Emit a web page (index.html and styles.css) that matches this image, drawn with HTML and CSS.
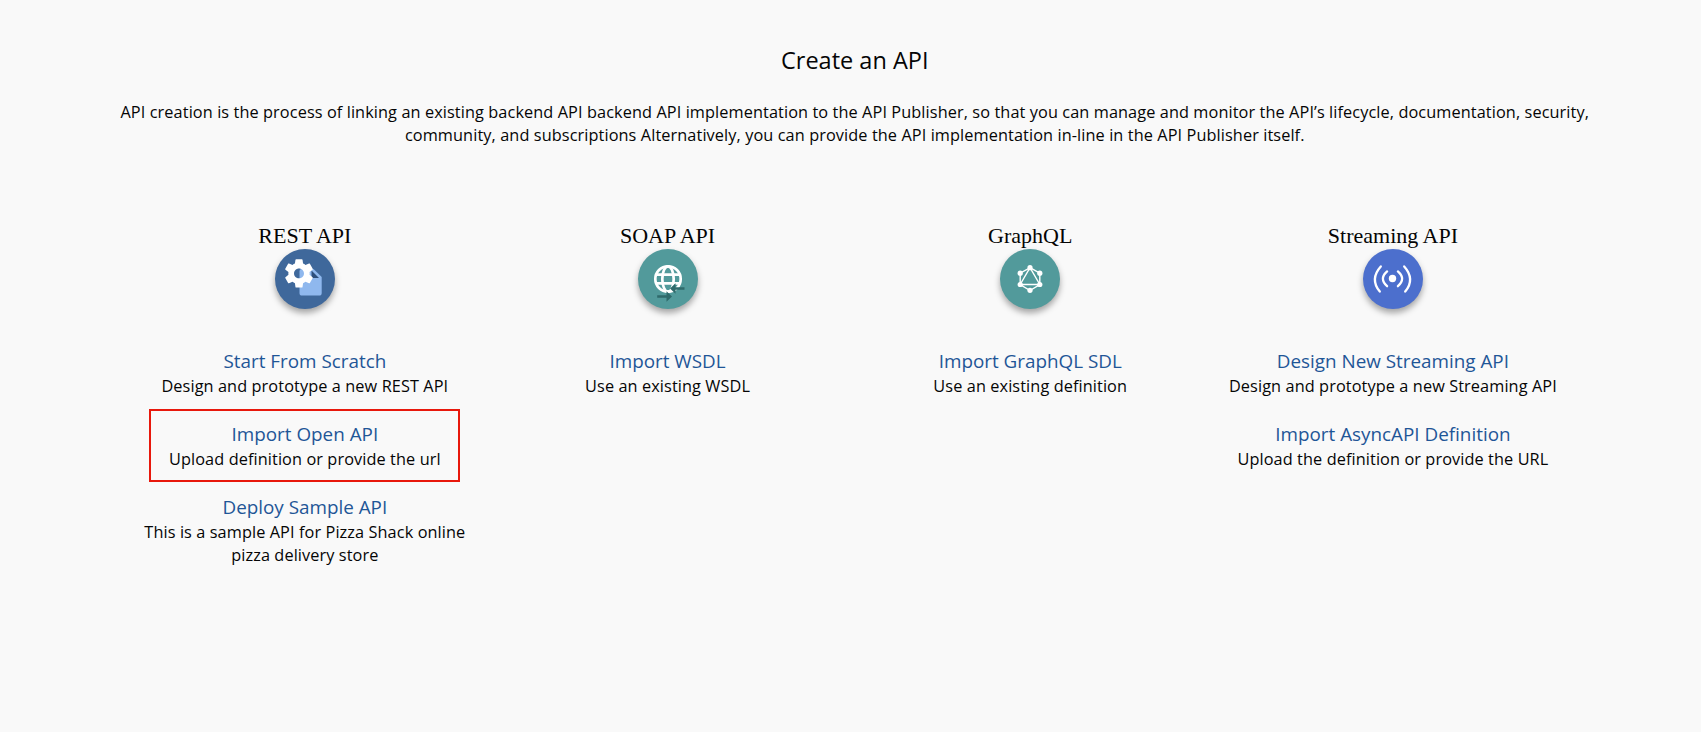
FILE: index.html
```html
<!DOCTYPE html>
<html lang="en">
<head>
<meta charset="utf-8">
<title>Create an API</title>
<link rel="stylesheet" href="styles.css">
</head>
<body>
<main class="page">
  <header class="intro">
    <h1 class="title">Create an API</h1>
    <p class="lead">API creation is the process of linking an existing backend API backend API implementation to the API Publisher, so that you can manage and monitor the API’s lifecycle, documentation, security,<br>community, and subscriptions Alternatively, you can provide the API implementation in-line in the API Publisher itself.</p>
  </header>
  <div class="types">
    <section class="type">
      <h2 class="type-name">REST API</h2>
      <div class="badge badge-rest">
        <svg viewBox="0 0 60 60">
          <path fill="#8fb8ee" d="M26.500 20H38.500L46.700 28V44Q46.700 46.600 44 46.600H27Q24.500 46.600 24.500 44V22Q24.500 20 26.500 20Z"/>
          <path fill="#2d4f7c" d="M36.500 21.500L44 29H36.500Z"/>
          <path fill="#fff" transform="translate(24 24.400) scale(1.420) translate(-12 -12)" d="M19.430 12.980c.040-.320.070-.640.070-.980s-.030-.660-.070-.980l2.110-1.650c.190-.150.240-.420.120-.640l-2-3.460c-.120-.220-.390-.300-.610-.220l-2.490 1c-.520-.400-1.080-.730-1.690-.980l-.380-2.650C14.460 2.180 14.250 2 14 2h-4c-.250 0-.460.180-.490.420l-.380 2.650c-.610.250-1.170.590-1.690.980l-2.490-1c-.230-.090-.490 0-.610.220l-2 3.460c-.130.220-.070.490.120.640l2.110 1.650c-.040.320-.070.650-.070.980s.030.660.070.980l-2.110 1.650c-.190.150-.240.420-.120.640l2 3.460c.120.220.390.300.610.220l2.490-1c.520.400 1.080.730 1.690.980l.380 2.650c.030.240.240.420.490.420h4c.250 0 .460-.180.490-.420l.380-2.650c.610-.250 1.170-.590 1.690-.980l2.490 1c.230.090.490 0 .610-.220l2-3.460c.120-.220.070-.490-.120-.640l-2.110-1.650zM12 15.500c-1.930 0-3.500-1.570-3.500-3.500s1.570-3.500 3.500-3.500 3.500 1.570 3.500 3.500-1.570 3.500-3.500 3.500z"/>
        </svg>
      </div>
      <ul class="actions">
        <li class="action"><a class="link">Start From Scratch</a><p class="hint">Design and prototype a new REST API</p></li>
        <li class="action action-marked"><a class="link">Import Open API</a><p class="hint">Upload definition or provide the url</p></li>
        <li class="action"><a class="link">Deploy Sample API</a><p class="hint">This is a sample API for Pizza Shack online<br>pizza delivery store</p></li>
      </ul>
    </section>
    <section class="type">
      <h2 class="type-name">SOAP API</h2>
      <div class="badge badge-teal">
        <svg viewBox="0 0 60 60">
          <g fill="none" stroke="#fff" stroke-width="2.700">
            <circle cx="30" cy="30" r="12.700"/>
            <ellipse cx="30" cy="30" rx="5.700" ry="12.700"/>
            <path d="M18.500 25.600H41.500M18.500 34.400H41.500"/>
          </g>
          <g fill="#2f6a6b">
            <path d="M46.500 38.200H37.500V34.200L32 39.500L37.500 44.800V40.800H46.500Z"/>
            <path d="M19.200 46.200H28.500V42.200L34 47.500L28.500 52.800V48.800H19.200Z"/>
          </g>
        </svg>
      </div>
      <ul class="actions">
        <li class="action"><a class="link">Import WSDL</a><p class="hint">Use an existing WSDL</p></li>
      </ul>
    </section>
    <section class="type">
      <h2 class="type-name">GraphQL</h2>
      <div class="badge badge-teal">
        <svg viewBox="0 0 60 60">
          <path fill="none" stroke="#fff" stroke-width="1.400" d="M30 18.700L39.800 24.200V35.500L30 41.500L20.200 35.500V24.200ZM30 18.700L39.800 35.500H20.200Z"/>
          <g fill="#fff"><circle cx="30" cy="18.700" r="2.600"/><circle cx="39.800" cy="24.200" r="2.600"/><circle cx="39.800" cy="35.500" r="2.600"/><circle cx="30" cy="41.300" r="2.600"/><circle cx="20.200" cy="35.500" r="2.600"/><circle cx="20.200" cy="24.200" r="2.600"/></g>
        </svg>
      </div>
      <ul class="actions">
        <li class="action"><a class="link">Import GraphQL SDL</a><p class="hint">Use an existing definition</p></li>
      </ul>
    </section>
    <section class="type">
      <h2 class="type-name">Streaming API</h2>
      <div class="badge badge-stream">
        <svg viewBox="0 0 60 60">
          <circle cx="29.500" cy="29.500" r="3.700" fill="#fff"/>
          <g fill="none" stroke="#fff" stroke-width="2.300" stroke-linecap="round">
            <path d="M24.100 22.400Q15.700 29.800 24.100 37.200M34.900 22.400Q43.300 29.800 34.900 37.200M17.800 17.400Q6.500 30 16.800 42.600M41.200 17.400Q52.500 30 42.200 42.600"/>
          </g>
        </svg>
      </div>
      <ul class="actions">
        <li class="action"><a class="link">Design New Streaming API</a><p class="hint">Design and prototype a new Streaming API</p></li>
        <li class="action"><a class="link">Import AsyncAPI Definition</a><p class="hint">Upload the definition or provide the URL</p></li>
      </ul>
    </section>
  </div>
</main>
</body>
</html>
```
FILE: styles.css
```css
* { box-sizing: border-box; margin: 0; padding: 0; }
body {
  background: #f9f9f9;
  color: #050505;
  font-family: "Open Sans", sans-serif;
}
.page { padding: 44px 115px 0 123.500px; min-height: 732px; }
.intro { text-align: center; white-space: nowrap; }
.title { font-size: 23.500px; line-height: 32px; font-weight: 400; }
.lead {
  display: flow-root;
  margin: 25px -20px 0;
  font-size: 16.300px;
  letter-spacing: .095px;
  line-height: 23.400px;
}
.types {
  display: grid;
  grid-template-columns: repeat(4, 362.700px);
  margin-top: 75px;
}
.type { display: flex; flex-direction: column; align-items: center; text-align: center; }
.type-name {
  font: 400 22px/26px "Liberation Serif", serif;
  height: 26px;
}
.badge {
  width: 60px;
  height: 60px;
  border-radius: 50%;
  box-shadow: 0 4px 6px rgba(0, 0, 0, .34);
}
.badge svg { display: block; width: 60px; height: 60px; }
.badge-rest { background: #3f689b; }
.badge-teal { background: #529a9b; }
.badge-stream { background: #4c6fcd; }
.actions { list-style: none; margin-top: 27px; }
.action {
  min-height: 73px;
  width: 340px;
  padding-top: 11px;
  white-space: nowrap;
}
.action-marked {
  width: 311px;
  margin: 0 auto;
  outline: 2px solid #e8180c;
  outline-offset: -2px;
}
.link { display: block; font-size: 18.850px; line-height: 28px; color: #1f5697; }
.hint { font-size: 16.300px; letter-spacing: .095px; line-height: 23.500px; }
```
